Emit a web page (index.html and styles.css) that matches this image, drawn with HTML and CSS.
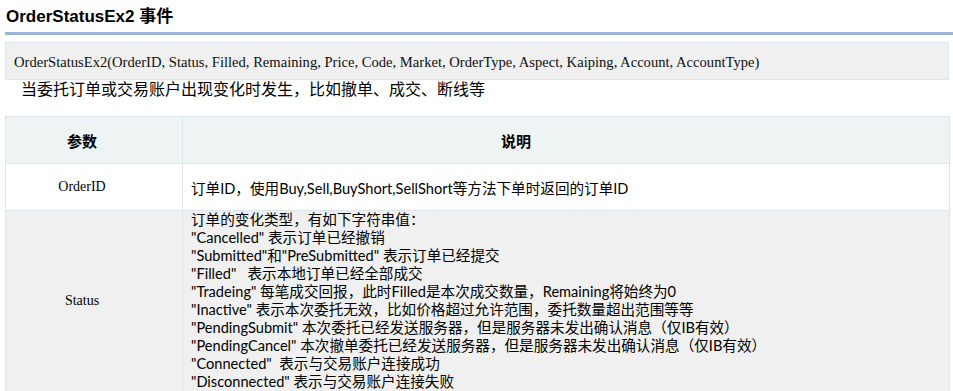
FILE: index.html
```html
<!DOCTYPE html>
<html>
<head>
<meta charset="utf-8">
<link rel="stylesheet" href="styles.css">
</head>
<body>
<h3 class="title">OrderStatusEx2 事件</h3>
<div class="rule"></div>
<div class="code">OrderStatusEx2(OrderID, Status, Filled, Remaining, Price, Code, Market, OrderType, Aspect, Kaiping, Account, AccountType)</div>
<p class="desc">当委托订单或交易账户出现变化时发生，比如撤单、成交、断线等</p>
<table class="params">
  <tr class="head">
    <th class="c1">参数</th>
    <th class="c2">说明</th>
  </tr>
  <tr class="row-white">
    <td class="name">OrderID</td>
    <td class="info">订单ID，使用Buy,Sell,BuyShort,SellShort等方法下单时返回的订单ID</td>
  </tr>
  <tr class="row-grey">
    <td class="name">Status</td>
    <td class="info lines">订单的变化类型，有如下字符串值：<br>"Cancelled" 表示订单已经撤销<br>"Submitted"和"PreSubmitted" 表示订单已经提交<br>"Filled"&nbsp;&nbsp; 表示本地订单已经全部成交<br>"Tradeing" 每笔成交回报，此时Filled是本次成交数量，Remaining将始终为0<br>"Inactive" 表示本次委托无效，比如价格超过允许范围，委托数量超出范围等等<br>"PendingSubmit" 本次委托已经发送服务器，但是服务器未发出确认消息（仅IB有效）<br>"PendingCancel" 本次撤单委托已经发送服务器，但是服务器未发出确认消息（仅IB有效）<br>"Connected"&nbsp; 表示与交易账户连接成功<br>"Disconnected" 表示与交易账户连接失败</td>
  </tr>
</table>
</body>
</html>
```
FILE: styles.css
```css
html, body {
  margin: 0;
  padding: 0;
  background: #ffffff;
  color: #000;
}
.title {
  margin: 0;
  padding: 6px 0 0 6px;
  height: 26px;
  font-family: "Liberation Sans", "Noto Sans CJK SC", sans-serif;
  font-weight: bold;
  font-size: 17px;
  line-height: 22px;
  color: #000;
}
.rule {
  margin-left: 5px;
  height: 0;
  border-top: 3px solid #9bb5d6;
}
.code {
  margin: 7px 4px 0 5px;
  height: 36px;
  box-sizing: content-box;
  background: #eff0ef;
  border: 1px solid #dde5ee;
  padding-left: 8px;
  font-family: "Liberation Serif", serif;
  font-size: 14.6px;
  line-height: 38px;
  color: #111;
}
.desc {
  margin: 0;
  padding-left: 21px;
  height: 18px;
  font-family: "Noto Sans CJK SC", sans-serif;
  font-size: 16px;
  line-height: 17px;
  color: #000;
}
.params {
  margin: 18px 0 0 5px;
  width: 945px;
  border-collapse: collapse;
  table-layout: fixed;
}
.params th, .params td {
  border: 1px solid #dde5ee;
  padding: 0;
}
.head {
  background: #eef3f4;
  height: 47px;
}
.head th {
  font-family: "Noto Sans CJK SC", sans-serif;
  font-size: 15px;
  font-weight: bold;
}
.c1 {
  width: 177px;
  text-align: center;
  padding-right: 24px !important;
  box-sizing: border-box;
}
.c2 {
  text-align: center;
  padding-right: 100px !important;
}
.row-white {
  background: #fff;
  height: 47px;
}
.row-grey {
  background: #eff0ef;
  height: 178px;
}
.name {
  text-align: center;
  padding-right: 24px !important;
  font-family: "Liberation Serif", serif;
  font-size: 14px;
}
.info {
  padding-left: 8px !important;
  font-family: Lato, "Noto Sans CJK SC", sans-serif;
  font-size: 14.6px;
  color: #000;
}
.lines {
  line-height: 18px;
  vertical-align: top;
  padding-top: 0 !important;
}
```
